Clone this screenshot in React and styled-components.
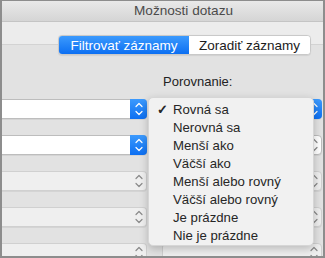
import React from "react";
import styled, { createGlobalStyle } from "styled-components";

const GlobalStyle = createGlobalStyle`
  html, body {
    margin: 0;
    padding: 0;
    background: #e2e2e2;
  }
  body {
    font-family: "Liberation Sans", Arial, sans-serif;
  }
`;

const Window = styled.div`
  position: relative;
  width: 325px;
  height: 258px;
  box-sizing: border-box;
  border: 2px solid #8d8d8d;
  border-top-width: 1px;
  background: #e2e2e2;
  overflow: hidden;
  display: flex;
  flex-direction: column;

  & > * {
    flex: none;
  }
`;

const TitleBar = styled.div`
  height: 21px;
  box-sizing: border-box;
  border-bottom: 1px solid #c4c4c4;
  background: linear-gradient(#e9e9e9, #d5d5d5);
  color: #4b4b4b;
  font-size: 13.6px;
  line-height: 20px;
  padding-left: 132px;
`;

const Toolbar = styled.div`
  height: 23px;
  box-sizing: border-box;
  background: #ececec;
  border-bottom: 1px solid #d3d3d3;
`;

const Segmented = styled.div`
  display: flex;
  margin: -10px 0 0 56px;
  height: 20px;
  width: 253px;
  box-sizing: border-box;
  border-radius: 4px;
  border: 1px solid #c9c9c9;
  background: #fff;
  overflow: hidden;
  box-shadow: 0 0.5px 1px rgba(0, 0, 0, 0.08);
`;

const Segment = styled.div`
  width: ${(p) => p.$w}px;
  display: flex;
  align-items: center;
  justify-content: center;
  font-size: 13.5px;
  color: ${(p) => (p.$active ? "#ffffff" : "#1c1c1c")};
  background: ${(p) =>
    p.$active ? "linear-gradient(#3c9afd, #0c6ff2)" : "#ffffff"};
`;

const Label = styled.div`
  margin: 19px 0 0 161px;
  font-size: 13px;
  line-height: 16px;
  color: #222;
`;

const Rows = styled.div`
  margin-top: 9px;
  display: flex;
  flex-direction: column;
  gap: 16px;
`;

const Row = styled.div`
  display: flex;
  gap: 15px;
`;

const Select = styled.div`
  flex: none;
  width: ${(p) => p.$w}px;
  height: 20px;
  box-sizing: border-box;
  display: flex;
  justify-content: flex-end;
  background: ${(p) => (p.$enabled ? "#ffffff" : "#efefef")};
  border: 1px solid ${(p) => (p.$enabled ? "#bdbdbd" : "#d0d0d0")};
  border-left: ${(p) => (p.$left ? "none" : undefined)};
  border-radius: ${(p) => (p.$left ? "0 4px 4px 0" : "4px")};
  box-shadow: 0 1px 0 rgba(0, 0, 0, 0.06);
`;

const Stepper = styled.div`
  width: 17px;
  margin: -1px -1px -1px 0;
  display: flex;
  align-items: center;
  justify-content: center;
  border-radius: 0 4px 4px 0;
  background: ${(p) =>
    p.$blue ? "linear-gradient(#3c9afd, #0c6ff2)" : "transparent"};
`;

const Menu = styled.div`
  position: absolute;
  left: 146px;
  top: 96px;
  width: 166px;
  height: 149px;
  box-sizing: border-box;
  padding-top: 3px;
  background: #f1f1f1;
  border: 1px solid #d6d6d6;
  border-radius: 5px;
  box-shadow: 0 3px 9px rgba(0, 0, 0, 0.22);
`;

const Item = styled.div`
  position: relative;
  height: 18px;
  line-height: 18px;
  padding-left: 24px;
  font-size: 13.2px;
  color: #262626;
`;

const Check = styled.span`
  position: absolute;
  left: 8px;
  top: 0;
  font-size: 13px;
  font-weight: bold;
  color: #262626;
`;

function Arrows({ color }) {
  return (
    <svg width="8" height="14" viewBox="0 0 8 14">
      <path
        d="M1 4.5 L4 1.5 L7 4.5 M1 9.5 L4 12.5 L7 9.5"
        fill="none"
        stroke={color}
        strokeWidth="1.2"
        strokeLinecap="round"
        strokeLinejoin="round"
      />
    </svg>
  );
}

const options = [
  "Rovná sa",
  "Nerovná sa",
  "Menší ako",
  "Väčší ako",
  "Menší alebo rovný",
  "Väčší alebo rovný",
  "Je prázdne",
  "Nie je prázdne",
];

const rows = [true, true, false, false, false];

export default function App() {
  return (
    <>
      <GlobalStyle />
      <Window>
        <TitleBar>Možnosti dotazu</TitleBar>
        <Toolbar />
        <Segmented>
          <Segment $active $w={130}>
            Filtrovať záznamy
          </Segment>
          <Segment $w={121}>Zoradiť záznamy</Segment>
        </Segmented>
        <Label>Porovnanie:</Label>
        <Rows>
          {rows.map((enabled, i) => (
            <Row key={i}>
              <Select $left $enabled={enabled} $w={145}>
                <Stepper $blue={enabled}>
                  <Arrows color={enabled ? "#ffffff" : "#8a8a8a"} />
                </Stepper>
              </Select>
              <Select $enabled={enabled} $w={160}>
                <Stepper $blue={i === 0}>
                  <Arrows color={i === 0 ? "#ffffff" : "#8a8a8a"} />
                </Stepper>
              </Select>
            </Row>
          ))}
        </Rows>
        <Menu>
          {options.map((o, i) => (
            <Item key={o}>
              {i === 0 && <Check>✓</Check>}
              {o}
            </Item>
          ))}
        </Menu>
      </Window>
    </>
  );
}
